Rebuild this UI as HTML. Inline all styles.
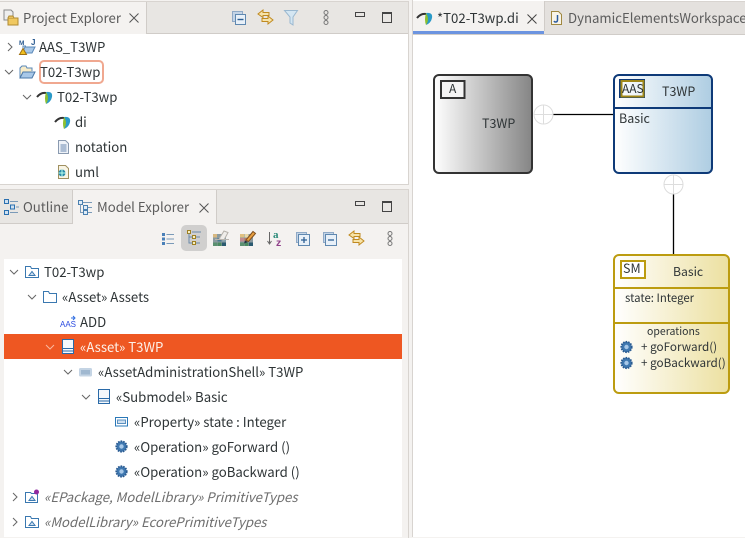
<!DOCTYPE html>
<html><head><meta charset="utf-8">
<style>
html,body{margin:0;padding:0}
body{width:745px;height:537px;overflow:hidden;background:#f4f2f0;position:relative;font-family:"Noto Sans CJK JP","Liberation Sans",sans-serif;font-size:13.2px;color:#2e3436}
.a{position:absolute}
.t{position:absolute;white-space:nowrap;line-height:18px;height:18px}
svg{position:absolute;overflow:visible}
.g{color:#5c5c5c}
.i{font-style:italic;color:#6e6e6e}
</style></head><body>
<!-- Project Explorer panel -->
<div class="a" style="left:0;top:1px;width:408px;height:182px;background:#fff;border-right:1px solid #d8d4d0;border-bottom:1px solid #d8d4d0;border-top:1px solid #d8d4d0"></div>
<div class="a" style="left:146px;top:2px;width:261px;height:31px;background:#e8e6e3;border-left:1px solid #d0ccc8;border-bottom:1px solid #d0ccc8"></div>
<div class="a" style="left:0;top:2px;width:146px;height:32px;background:#f4f2f0"></div>
<svg style="left:3px;top:9px" width="16" height="17" viewBox="0 0 16 17"><path d="M1 1h7l2 2v8H1z" fill="#eee" stroke="#8a8a8a"/><path d="M5 9h10v7H5z" fill="#f0c860" stroke="#b08a30"/><path d="M5 9l1-2h4l1 2" fill="#e8c060" stroke="#b08a30"/></svg>
<div class="t g" style="left:23px;top:9px">Project Explorer</div>
<svg style="left:129px;top:13px" width="10" height="10" viewBox="0 0 10 10"><path d="M.5.5l9 9M9.5.5l-9 9" stroke="#555" fill="none"/></svg>
<!-- pe toolbar -->
<svg style="left:232px;top:11px" width="14" height="14" viewBox="0 0 14 14"><rect x=".5" y=".5" width="10" height="10" fill="#c4d4e6" stroke="#8fa9c6"/><rect x="3.5" y="3.5" width="10" height="10" fill="#e8f0f8" stroke="#5f88b0"/><path d="M5.5 8.5h6" stroke="#2c5f94" stroke-width="1.4"/></svg>
<svg style="left:257px;top:9px" width="17" height="16" viewBox="0 0 17 16"><path d="M6 1L1 5l5 3.500V6.500h6v-3H6z" fill="#f7e3a8" stroke="#c08a20"/><path d="M11 7l5 4-5 4v-2.500H5v-3h6z" fill="#f7e3a8" stroke="#c08a20"/></svg>
<svg style="left:284px;top:10px" width="15" height="15" viewBox="0 0 15 15"><path d="M.5.5h13L9 7v8l-3-2V7z" fill="#d4e6f2" stroke="#9ab8d0"/></svg>
<svg style="left:323px;top:10px" width="6" height="15" viewBox="0 0 6 15"><circle cx="3" cy="2.500" r="2" fill="none" stroke="#777"/><circle cx="3" cy="7.500" r="2" fill="none" stroke="#777"/><circle cx="3" cy="12.500" r="2" fill="none" stroke="#777"/></svg>
<div class="a" style="left:355px;top:12px;width:8px;height:3px;border:1px solid #444"></div>
<div class="a" style="left:382px;top:12px;width:8px;height:8px;border:1px solid #444;border-top-width:2px"></div>

<svg style="left:6px;top:42px" width="8" height="10" viewBox="0 0 8 10"><path d="M2 1l4 4-4 4" fill="none" stroke="#666"/></svg>
<svg style="left:19px;top:39px" width="17" height="16" viewBox="0 0 17 16"><path d="M6 8h10l-3 6H3z" fill="#a8c8e8" stroke="#5a88b8"/><path d="M4 14V7h3" fill="none" stroke="#5a88b8"/><path d="M0.500 15.500l3.500-6 3.500 6z" fill="#f0c020" stroke="#a07010"/><text x="0" y="6" font-size="6.500" font-weight="bold" fill="#2a5a90" font-family="Liberation Sans">M</text><text x="12" y="6" font-size="8" font-weight="bold" fill="#2a5a90" font-family="Liberation Sans">J</text></svg>
<div class="t" style="left:39px;top:38px">AAS_T3WP</div>

<svg style="left:4px;top:68px" width="10" height="8" viewBox="0 0 10 8"><path d="M1 2l4 4 4-4" fill="none" stroke="#666"/></svg>
<svg style="left:19px;top:65px" width="17" height="14" viewBox="0 0 17 14"><path d="M1 13V3l2-2h4l1 2h5v3" fill="#f8ecc8" stroke="#5a88b8"/><path d="M4 7h12l-3 6H1z" fill="#a8c8e8" stroke="#4a78a8"/></svg>
<div class="a" style="left:39px;top:60px;width:61px;height:20px;border:2px solid #f0a890;border-radius:5px"></div>
<div class="t" style="left:40px;top:63px">T02-T3wp</div>

<svg style="left:22px;top:93px" width="10" height="8" viewBox="0 0 10 8"><path d="M1 2l4 4 4-4" fill="none" stroke="#666"/></svg>
<svg style="left:37px;top:91px" width="16" height="13" viewBox="0 0 16 13"><path d="M0 6Q4 1 9 2" fill="none" stroke="#333" stroke-width="2"/><path d="M9 1Q16 0 15 6Q14 11 9 13Q12 7 9 1z" fill="#2a9ac8"/><path d="M9 1Q13 7 9 13Q7 8 9 1z" fill="#8cc030"/></svg>
<div class="t" style="left:57px;top:88px">T02-T3wp</div>

<svg style="left:55px;top:116px" width="16" height="13" viewBox="0 0 16 13"><path d="M0 6Q4 1 9 2" fill="none" stroke="#333" stroke-width="2"/><path d="M9 1Q16 0 15 6Q14 11 9 13Q12 7 9 1z" fill="#2a9ac8"/><path d="M9 1Q13 7 9 13Q7 8 9 1z" fill="#8cc030"/></svg>
<div class="t" style="left:75px;top:113px">di</div>
<svg style="left:58px;top:140px" width="11" height="14" viewBox="0 0 11 14"><path d="M.5.5h7l3 3v10H.5z" fill="#eef2f8" stroke="#8a9ab0"/><path d="M2.500 5h6M2.500 7h6M2.500 9h6M2.500 11h6" stroke="#6a88b0"/></svg>
<div class="t" style="left:75px;top:138px">notation</div>
<svg style="left:57px;top:165px" width="12" height="14" viewBox="0 0 12 14"><path d="M1.500.5h7l3 3v10h-10z" fill="#f8f4e4" stroke="#a09060"/><circle cx="5" cy="8" r="3.500" fill="#2a8aa8"/><path d="M1.500 8h7M5 4.500v7" stroke="#bfe" /></svg>
<div class="t" style="left:75px;top:163px">uml</div>

<!-- Model Explorer panel -->
<div class="a" style="left:0;top:189px;width:408px;height:348px;background:#f4f2f0;border-top:1px solid #d8d4d0;border-right:1px solid #d8d4d0"></div>
<div class="a" style="left:0;top:190px;width:72px;height:33px;background:#e8e6e3;border-right:1px solid #d0ccc8;border-bottom:1px solid #d0ccc8"></div>
<div class="a" style="left:216px;top:190px;width:191px;height:33px;background:#e8e6e3;border-left:1px solid #d0ccc8;border-bottom:1px solid #d0ccc8"></div>
<svg style="left:4px;top:199px" width="15" height="16" viewBox="0 0 15 16"><path d="M.5.500h4v4h-4zM.5 11.500h4v4h-4zM6.500 6h4v4h-4z" fill="#cfe0f0" stroke="#2a70b0"/><path d="M6 2.500h8M12 8h3M6 13.500h8" stroke="#7a9ab8"/></svg>
<div class="t g" style="left:23px;top:198px">Outline</div>
<svg style="left:78px;top:200px" width="15" height="15" viewBox="0 0 15 15"><path d="M.5.500h4v4h-4zM5.500 5.500h4v4h-4zM5.500 10.500h4v4h-4z" fill="#e0ecf6" stroke="#4a80b0"/><path d="M2.500 4.500V12.500H5M5 2.500h9M10 7.500h4M10 12.500h4" stroke="#7a9ab8" fill="none"/></svg>
<div class="t g" style="left:97px;top:198px">Model Explorer</div>
<svg style="left:199px;top:203px" width="10" height="10" viewBox="0 0 10 10"><path d="M.5.5l9 9M9.500.5l-9 9" stroke="#555" fill="none"/></svg>
<div class="a" style="left:355px;top:201px;width:8px;height:3px;border:1px solid #444"></div>
<div class="a" style="left:382px;top:201px;width:8px;height:8px;border:1px solid #444;border-top-width:2px"></div>

<!-- me toolbar -->
<svg style="left:162px;top:233px" width="12" height="12" viewBox="0 0 12 12"><path d="M0 0h3v3H0zM0 4.500h3v3H0zM0 9h3v3H0z" fill="#4a80b8"/><path d="M4.500 1.500H12M4.500 6H12M4.500 10.500H12" stroke="#7a9ab8"/></svg>
<div class="a" style="left:181px;top:225px;width:26px;height:26px;background:#d0cfce;border-radius:5px"></div>
<svg style="left:187px;top:230px" width="15" height="16" viewBox="0 0 15 16"><path d="M.5.500h3v3h-3zM5.500 5.500h3v3h-3zM5.500 11.500h3v3h-3z" fill="#f8f0c0" stroke="#a08020"/><path d="M2 3.500v9.500h3.500M5 2h9M2 7h3.500M9 7h4M9 13h4" stroke="#6a8aa8" fill="none"/></svg>
<svg style="left:213px;top:230px" width="16" height="16" viewBox="0 0 16 16"><rect x="0" y="4" width="13" height="12" fill="#8a9aa0"/><rect x="0" y="4" width="4" height="3.500" fill="#d8b880"/><rect x="4.500" y="8" width="4" height="3.500" fill="#4a7a90"/><rect x="9" y="8" width="4" height="3.500" fill="#7aa0b0"/><rect x="0" y="12.500" width="4" height="3.500" fill="#5a9070"/><rect x="4.500" y="12.500" width="4" height="3.500" fill="#4a8a60"/><rect x="9" y="12.500" width="4" height="3.500" fill="#2a5a70"/><path d="M6 9l5-8 4 1.500-4 7.500z" fill="#efedea" stroke="#b4b0aa"/><path d="M2 9.500h14" stroke="#b8b4ae"/></svg>
<svg style="left:240px;top:230px" width="16" height="16" viewBox="0 0 16 16"><rect x="0" y="4" width="13" height="12" fill="#8a9aa0"/><rect x="0" y="4" width="4" height="3.500" fill="#e0c080"/><rect x="4.500" y="4" width="4" height="3.500" fill="#e8d8a8"/><rect x="0" y="8" width="4" height="3.500" fill="#c08a90"/><rect x="4.500" y="8" width="4" height="3.500" fill="#c07a60"/><rect x="0" y="12.500" width="4" height="3.500" fill="#5a9070"/><rect x="4.500" y="12.500" width="4" height="3.500" fill="#4a8a60"/><rect x="9" y="12.500" width="4" height="3.500" fill="#2a5a70"/><path d="M6 10L13 1.500l2.500 2-7 8z" fill="#e8a040" stroke="#805020"/><path d="M5 10.500l3 1.500-4 1.500z" fill="#203040"/></svg>
<svg style="left:267px;top:230px" width="17" height="16" viewBox="0 0 17 16"><path d="M2.500 2v11M.5 11l2 3 2-3" stroke="#666" fill="none"/><text x="6" y="8" font-size="11" font-weight="bold" fill="#2a8a78" font-family="Liberation Serif">a</text><text x="9" y="16" font-size="10.500" font-weight="bold" fill="#90408a" font-family="Liberation Sans">z</text></svg>
<svg style="left:296px;top:232px" width="14" height="14" viewBox="0 0 14 14"><rect x=".5" y=".5" width="10" height="10" fill="#c4d4e6" stroke="#8fa9c6"/><rect x="2.500" y="2.500" width="11" height="11" fill="#e8f0f8" stroke="#5f88b0"/><path d="M5 8h6M8 5v6" stroke="#2c5f94" stroke-width="1.300"/></svg>
<svg style="left:323px;top:232px" width="14" height="14" viewBox="0 0 14 14"><rect x=".5" y=".5" width="10" height="10" fill="#c4d4e6" stroke="#8fa9c6"/><rect x="2.500" y="2.500" width="11" height="11" fill="#e8f0f8" stroke="#5f88b0"/><path d="M5 8h6" stroke="#2c5f94" stroke-width="1.300"/></svg>
<svg style="left:348px;top:230px" width="17" height="16" viewBox="0 0 17 16"><path d="M6 1L1 5l5 3.500V6.500h6v-3H6z" fill="#f7e3a8" stroke="#c08a20"/><path d="M11 7l5 4-5 4v-2.500H5v-3h6z" fill="#f7e3a8" stroke="#c08a20"/></svg>
<svg style="left:387px;top:231px" width="6" height="15" viewBox="0 0 6 15"><circle cx="3" cy="2.500" r="2" fill="none" stroke="#777"/><circle cx="3" cy="7.500" r="2" fill="none" stroke="#777"/><circle cx="3" cy="12.500" r="2" fill="none" stroke="#777"/></svg>

<!-- me tree -->
<div class="a" style="left:4px;top:259px;width:398px;height:278px;background:#fff"></div>
<div class="a" style="left:4px;top:334px;width:398px;height:25px;background:#ee5722"></div>

<svg style="left:9px;top:268px" width="10" height="8" viewBox="0 0 10 8"><path d="M1 2l4 4 4-4" fill="none" stroke="#666"/></svg>
<svg style="left:25px;top:266px" width="14" height="12" viewBox="0 0 14 12"><path d="M.5 11.500V.5h5l1 2h7v9z" fill="#fff" stroke="#3a78b0"/><path d="M4 9.500l3-4 3 4z" fill="#cfe0f0" stroke="#3a78b0"/></svg>
<div class="t" style="left:44px;top:263px">T02-T3wp</div>

<svg style="left:27px;top:293px" width="10" height="8" viewBox="0 0 10 8"><path d="M1 2l4 4 4-4" fill="none" stroke="#666"/></svg>
<svg style="left:43px;top:291px" width="14" height="12" viewBox="0 0 14 12"><path d="M.5 11.500V.5h5l1 2h7v9z" fill="#fff" stroke="#3a78b0"/></svg>
<div class="t" style="left:62px;top:288px">«Asset» Assets</div>

<svg style="left:60px;top:315px" width="16" height="13" viewBox="0 0 16 13"><text x="0" y="12" font-size="8" fill="#2a4ae0" font-family="Liberation Sans">AAS</text><path d="M11 3h3M13 1l2 2-2 2" stroke="#2a6ae0" fill="none"/></svg>
<div class="t" style="left:80px;top:313px">ADD</div>

<svg style="left:45px;top:343px" width="10" height="8" viewBox="0 0 10 8"><path d="M1 2l4 4 4-4" fill="none" stroke="#f8b8a0"/></svg>
<svg style="left:62px;top:339px" width="12" height="15" viewBox="0 0 12 15"><rect x=".5" y=".5" width="11" height="14" fill="#f4f8fc" stroke="#2a6aa8"/><path d="M.5 9.500h11M.5 12h11" stroke="#2a6aa8"/></svg>
<div class="t" style="left:80px;top:338px;color:#fdf0e8">«Asset» T3WP</div>

<svg style="left:63px;top:368px" width="10" height="8" viewBox="0 0 10 8"><path d="M1 2l4 4 4-4" fill="none" stroke="#666"/></svg>
<svg style="left:79px;top:367px" width="14" height="10" viewBox="0 0 14 10"><rect x="0" y="1" width="13" height="8.500" rx="1.500" fill="#c4d4e4"/><rect x="2" y="3" width="9" height="4.500" fill="#a0b8d0"/></svg>
<div class="t" style="left:98px;top:363px">«AssetAdministrationShell» T3WP</div>

<svg style="left:81px;top:393px" width="10" height="8" viewBox="0 0 10 8"><path d="M1 2l4 4 4-4" fill="none" stroke="#666"/></svg>
<svg style="left:98px;top:389px" width="12" height="15" viewBox="0 0 12 15"><rect x=".5" y=".5" width="11" height="14" fill="#f4f8fc" stroke="#2a6aa8"/><path d="M.5 9.500h11M.5 12h11" stroke="#2a6aa8"/></svg>
<div class="t" style="left:116px;top:388px">«Submodel» Basic</div>

<svg style="left:115px;top:417px" width="13" height="10" viewBox="0 0 13 10"><rect x=".5" y=".5" width="12" height="8.500" fill="#fff" stroke="#2a78b8"/><rect x="2.500" y="3" width="8" height="3.500" fill="#cfe0f0" stroke="#5a90c0"/></svg>
<div class="t" style="left:134px;top:413px">«Property» state : Integer</div>

<svg style="left:115px;top:440px" width="13" height="13" viewBox="0 0 13 13"><circle cx="6.500" cy="6.500" r="5.200" fill="#3f78b0" stroke="#2a5a90" stroke-width="1.800" stroke-dasharray="1.600 1"/><circle cx="6.500" cy="6.500" r="2.200" fill="#a8c8e8"/></svg>
<div class="t" style="left:134px;top:438px">«Operation» goForward ()</div>
<svg style="left:115px;top:465px" width="13" height="13" viewBox="0 0 13 13"><circle cx="6.500" cy="6.500" r="5.200" fill="#3f78b0" stroke="#2a5a90" stroke-width="1.800" stroke-dasharray="1.600 1"/><circle cx="6.500" cy="6.500" r="2.200" fill="#a8c8e8"/></svg>
<div class="t" style="left:134px;top:463px">«Operation» goBackward ()</div>

<svg style="left:11px;top:492px" width="8" height="10" viewBox="0 0 8 10"><path d="M2 1l4 4-4 4" fill="none" stroke="#666"/></svg>
<svg style="left:25px;top:489px" width="15" height="14" viewBox="0 0 15 14"><path d="M.5 13.500V3.500h5l1 1h6v9z" fill="#fff" stroke="#3a78b0"/><path d="M4 11.500l3-4 3 4z" fill="#cfe0f0" stroke="#3a78b0"/><circle cx="11.500" cy="3" r="2.500" fill="#902aa0"/></svg>
<div class="t i" style="left:44px;top:488px">«EPackage, ModelLibrary» PrimitiveTypes</div>

<svg style="left:11px;top:517px" width="8" height="10" viewBox="0 0 8 10"><path d="M2 1l4 4-4 4" fill="none" stroke="#666"/></svg>
<svg style="left:25px;top:516px" width="14" height="12" viewBox="0 0 14 12"><path d="M.5 11.500V.5h5l1 2h7v9z" fill="#fff" stroke="#3a78b0"/><path d="M4 9.500l3-4 3 4z" fill="#cfe0f0" stroke="#3a78b0"/></svg>
<div class="t i" style="left:44px;top:513px">«ModelLibrary» EcorePrimitiveTypes</div>

<!-- Editor -->
<div class="a" style="left:412px;top:0;width:333px;height:537px;background:#fff;border-left:1px solid #d8d4d0"></div>
<div class="a" style="left:413px;top:1px;width:332px;height:32px;background:#e4e1de;border-bottom:1px solid #d0ccc8;border-top:1px solid #d8d4d0"></div>
<div class="a" style="left:413px;top:1px;width:131px;height:30px;background:#f4f2f0;border-right:1px solid #d0ccc8"></div>
<div class="a" style="left:413px;top:31px;width:131px;height:3px;background:#6c94e0"></div>
<svg style="left:417px;top:12px" width="16" height="13" viewBox="0 0 16 13"><path d="M0 6Q4 1 9 2" fill="none" stroke="#333" stroke-width="2"/><path d="M9 1Q16 0 15 6Q14 11 9 13Q12 7 9 1z" fill="#2a9ac8"/><path d="M9 1Q13 7 9 13Q7 8 9 1z" fill="#8cc030"/></svg>
<div class="t" style="left:437px;top:9px">*T02-T3wp.di</div>
<svg style="left:527px;top:14px" width="10" height="10" viewBox="0 0 10 10"><path d="M.5.5l9 9M9.500.5l-9 9" stroke="#444" fill="none"/></svg>
<svg style="left:551px;top:11px" width="11" height="14" viewBox="0 0 11 14"><path d="M.5.5h7l3 3v10H.5z" fill="#f8f4e8" stroke="#a08840"/><path d="M6.500 4v5q0 2-2 2-1 0-1.500-1" fill="none" stroke="#2a5aa0" stroke-width="1.500"/></svg>
<div class="t g" style="left:568px;top:9px">DynamicElementsWorkspace</div>

<!-- Diagram -->
<svg style="left:0;top:0" width="745" height="537" viewBox="0 0 745 537">
<defs>
<linearGradient id="gk" x1="0" x2="1"><stop offset="0" stop-color="#fff"/><stop offset="1" stop-color="#858585"/></linearGradient>
<linearGradient id="gb" x1="0" x2="1"><stop offset="0" stop-color="#fff"/><stop offset="1" stop-color="#aecde2"/></linearGradient>
<linearGradient id="gy" x1="0" x2="1"><stop offset="0" stop-color="#fff"/><stop offset="1" stop-color="#ece0a0"/></linearGradient>
</defs>
<path d="M553 114.500h61M673.500 194v61" stroke="#000" stroke-width="1.300" fill="none"/>
<g fill="#fff" stroke="#ddd"><circle cx="543.500" cy="114.500" r="9.500"/><circle cx="673.500" cy="184.500" r="9.500"/></g>
<path d="M534 114.500h19M543.500 105v19M664 184.500h19M673.500 175v19" stroke="#ddd"/>
<rect x="434" y="75" width="98" height="98" rx="5" fill="url(#gk)" stroke="#333" stroke-width="2"/>
<rect x="441" y="81" width="23.500" height="17" fill="#f4f4f4" stroke="#333" stroke-width="2"/>
<rect x="614" y="75" width="98" height="98" rx="5" fill="url(#gb)" stroke="#0e3a78" stroke-width="2"/>
<path d="M614 108h98" stroke="#0e3a78" stroke-width="2"/>
<rect x="620" y="80" width="24" height="17" fill="none" stroke="#0e3a78" stroke-width="2"/>
<rect x="621.500" y="81" width="22" height="15.500" fill="none" stroke="#a08818" stroke-width="2"/>
<rect x="614" y="255" width="115" height="138" rx="5" fill="url(#gy)" stroke="#bc9c10" stroke-width="2"/>
<path d="M614 288h115M614 323h115" stroke="#bc9c10" stroke-width="2"/>
<rect x="621" y="261" width="24" height="17" fill="#fff" stroke="#bc9c10" stroke-width="2"/>
<g fill="#3f78b0" stroke="#2a5a90" stroke-width="1.800" stroke-dasharray="1.600 1"><circle cx="626.500" cy="347" r="5.200"/><circle cx="626.500" cy="363" r="5.200"/></g>
<g fill="#a8c8e8"><circle cx="626.500" cy="347" r="2.200"/><circle cx="626.500" cy="363" r="2.200"/></g>
</svg>
<div class="t" style="left:449px;top:80px;font-size:12px">A</div>
<div class="t" style="left:482px;top:114px;font-size:12.500px">T3WP</div>
<div class="t" style="left:622px;top:80px;font-size:12px">AAS</div>
<div class="t" style="left:662px;top:82px;font-size:12.500px">T3WP</div>
<div class="t" style="left:619px;top:109px;font-size:12.500px">Basic</div>
<div class="t" style="left:623px;top:259px;font-size:12.500px">SM</div>
<div class="t" style="left:673px;top:262px;font-size:12.200px">Basic</div>
<div class="t" style="left:625px;top:289px;font-size:11.400px">state: Integer</div>
<div class="t" style="left:647px;top:323px;font-size:10.500px">operations</div>
<div class="t" style="left:641px;top:338px;font-size:11.700px">+ goForward()</div>
<div class="t" style="left:641px;top:354px;font-size:11.700px">+ goBackward()</div>
</body></html>
